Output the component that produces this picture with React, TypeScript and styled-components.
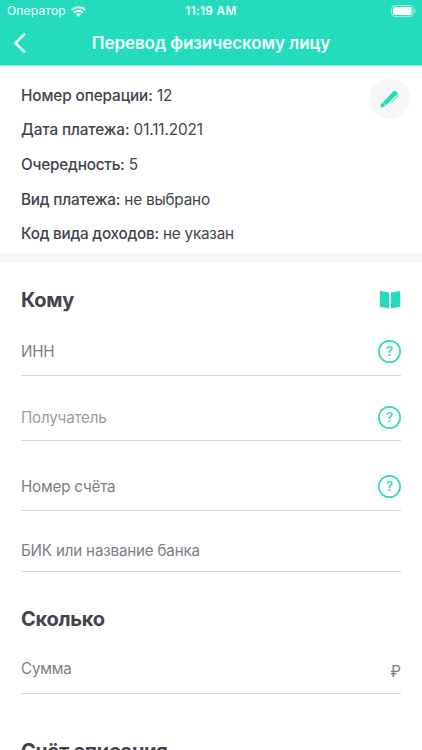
import React from "react";
import styled, { createGlobalStyle } from "styled-components";

const GlobalStyle = createGlobalStyle`
  * { box-sizing: border-box; }
  body { margin: 0; background: #fff; overflow: hidden; }
`;

const teal = "#24dcbd";

const Screen = styled.div`
  width: 422px;
  height: 750px;
  overflow: hidden;
  background: #fff;
  color: #43444b;
  font-family: Inter, Roboto, sans-serif;
`;

const Header = styled.header`
  height: 66px;
  background: ${teal};
  color: #effffc;
  border-bottom: 1px solid #7debd9;
`;

const StatusBar = styled.div`
  height: 22px;
  display: grid;
  grid-template-columns: 1fr auto 1fr;
  align-items: center;
  padding: 0 6px 0 7px;
  font-size: 12px;
  line-height: 22px;
`;

const Carrier = styled.div`
  display: flex;
  align-items: center;
  gap: 5px;
  letter-spacing: 0.18px;
`;

const Clock = styled.div`
  font-weight: 600;
  font-size: 11.8px;
  letter-spacing: 0.32px;
  padding-right: 1px;
`;

const BatteryIcon = styled.svg`
  justify-self: end;
`;

const NavBar = styled.div`
  height: 43px;
  display: grid;
  grid-template-columns: 40px 1fr 40px;
  align-items: start;
`;

const BackButton = styled.button`
  height: 42px;
  border: 0;
  padding: 0 0 0 13px;
  background: none;
  color: inherit;
  display: flex;
  align-items: center;
`;

const Title = styled.h1`
  margin: 0;
  text-align: center;
  font-size: 17.1px;
  letter-spacing: -0.13px;
  font-weight: 600;
  line-height: 42px;
  white-space: nowrap;
`;

const Summary = styled.section`
  height: 187px;
  display: flex;
  justify-content: space-between;
  padding: 12px 12px 0 21px;
`;

const Details = styled.div`
  display: flex;
  flex-direction: column;
  padding-top: 0.7px;
`;

const Detail = styled.div<{ $spacing: number }>`
  height: 34.65px;
  line-height: 34px;
  font-size: 15.3px;
  white-space: nowrap;
  letter-spacing: ${(p) => p.$spacing}px;
  b { font-weight: 500; }
`;

const EditButton = styled.button`
  width: 41px;
  height: 41px;
  border: 0;
  border-radius: 50%;
  padding: 0;
  background: #f7f7f7;
  display: grid;
  place-items: center;
`;

const Divider = styled.div`
  height: 10px;
  background: #f7f7f7;
`;

const Form = styled.main`
  padding: 0 21px;
`;

const SectionHead = styled.div<{ $top: number; $bottom: number }>`
  display: flex;
  justify-content: space-between;
  align-items: center;
  margin-top: ${(p) => p.$top}px;
  margin-bottom: ${(p) => p.$bottom}px;
  height: 30px;
`;

const Heading = styled.h2`
  margin: 0;
  font-size: 20px;
  letter-spacing: -0.28px;
  line-height: 30px;
  font-weight: 700;
  white-space: nowrap;
`;

const Field = styled.div<{ $height: number; $pad: number; $muted?: boolean }>`
  height: ${(p) => p.$height}px;
  padding-bottom: ${(p) => p.$pad}px;
  border-bottom: 1px solid #d8d8da;
  display: flex;
  align-items: flex-end;
  justify-content: space-between;
  font-size: 15.2px;
  line-height: 24px;
  color: ${(p) => (p.$muted ? "#9a9ba2" : "#7d7e84")};
  letter-spacing: -0.2px;
`;

const HelpIcon = styled.span`
  width: 23px;
  height: 23px;
  box-shadow: inset 0 0 0 1.7px #36d8bc;
  border-radius: 50%;
  margin-bottom: 1px;
  color: #36d8bc;
  text-align: center;
  font-size: 13px;
  font-weight: 600;
  line-height: 23px;
  letter-spacing: 0;
`;

const Currency = styled.span`
  font-size: 15.2px;
  line-height: 18px;
  letter-spacing: 0;
`;

const Help = () => <HelpIcon>?</HelpIcon>;

export default function App() {
  return (
    <Screen>
      <GlobalStyle />
      <Header>
        <StatusBar>
          <Carrier>
            Оператор
            <svg width="15" height="11" viewBox="0 0 15 11" fill="none" stroke="currentColor" strokeWidth="2">
              <path d="M.8 4.1a9.5 9.5 0 0 1 13.4 0M3.1 6.7a6.2 6.2 0 0 1 8.8 0" />
              <path d="M5 8.4a3.6 3.6 0 0 1 5 0L7.5 11z" fill="currentColor" stroke="none" />
            </svg>
          </Carrier>
          <Clock>11:19 AM</Clock>
          <BatteryIcon width="25" height="12" viewBox="0 0 25 12">
            <rect x=".6" y=".6" width="21.4" height="10.8" rx="3" fill="none" stroke="#a5f1e5" />
            <rect x="2" y="2" width="18.6" height="8" rx="1.7" fill="#fff" />
            <path d="M23.4 4v4q1.3-.5 1.3-2t-1.3-2" fill="#a5f1e5" />
          </BatteryIcon>
        </StatusBar>
        <NavBar>
          <BackButton aria-label="Назад">
            <svg width="13" height="20" viewBox="0 0 13 20" fill="none" stroke="currentColor" strokeWidth="2.5" strokeLinecap="round" strokeLinejoin="round">
              <path d="M11.2 1.4 2.4 10l8.8 8.6" />
            </svg>
          </BackButton>
          <Title>Перевод физическому лицу</Title>
        </NavBar>
      </Header>
      <Summary>
        <Details>
          <Detail $spacing={-0.1}><b>Номер операции:</b> 12</Detail>
          <Detail $spacing={-0.12}><b>Дата платежа:</b> 01.11.2021</Detail>
          <Detail $spacing={-0.21}><b>Очередность:</b> 5</Detail>
          <Detail $spacing={-0.2}><b>Вид платежа:</b> не выбрано</Detail>
          <Detail $spacing={-0.24}><b>Код вида доходов:</b> не указан</Detail>
        </Details>
        <EditButton aria-label="Изменить">
          <svg width="20" height="18" viewBox="0 0 20 18" fill={teal}>
            <path d="M.8 17.4.5 14.6l1.8-1.8 3 2.9-1.7 1.4z" />
            <path d="M2.7 12.4 13.4 1.3q1.3-1.2 2.5-.1l1.1 1.1q1 1.2-.1 2.4L5.9 15.3z" />
            <path d="m17.3 4 .7.7q.5.6-.1 1.2l-7.1 7" fill="none" stroke={teal} strokeWidth="1" />
          </svg>
        </EditButton>
      </Summary>
      <Divider />
      <Form>
        <SectionHead $top={22} $bottom={0}>
          <Heading>Кому</Heading>
          <svg width="22" height="18" viewBox="0 0 22 18" fill={teal}>
            <path d="M.8 0 10 1.6v15.8L.8 15.8zM12 1.6 21.2 0v15.8L12 17.4z" />
          </svg>
        </SectionHead>
        <Field $height={61} $pad={11}><span>ИНН</span><Help /></Field>
        <Field $height={65} $pad={10} $muted><span>Получатель</span><Help /></Field>
        <Field $height={70} $pad={11}><span>Номер счёта</span><Help /></Field>
        <Field $height={61} $pad={8}><span>БИК или название банка</span></Field>
        <SectionHead $top={32} $bottom={0}>
          <Heading>Сколько</Heading>
        </SectionHead>
        <Field $height={60} $pad={12}><span>Сумма</span><Currency>₽</Currency></Field>
        <SectionHead $top={42} $bottom={0}>
          <Heading>Счёт списания</Heading>
        </SectionHead>
      </Form>
    </Screen>
  );
}
